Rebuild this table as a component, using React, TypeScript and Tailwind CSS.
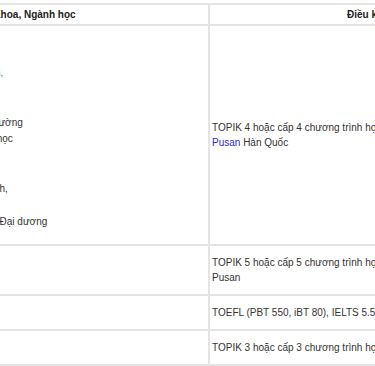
const leftLines: { text: string; link?: string }[] = [
  { text: "Khoa Kinh tế Quốc tế" },
  { text: "Ngữ văn Hàn, Ngữ văn Anh" },
  { text: "Quản trị Kinh doanh, ", link: "Tài chính," },
  { text: "Khoa Khoa học Xã hội" },
  { text: "Hành chính công, Luật" },
  { text: "Điện tử, Địa lý, Kỹ thuật Môi trường" },
  { text: "Toán, Vật liệu, Hóa học, Sinh học" },
  { text: "Khoa Nhân văn" },
  { text: "Triết học, Lịch sử" },
  { text: "Ngữ văn Hàn, Nhật, Trung, Anh," },
  { text: "Khoa Khoa học Tự nhiên" },
  { text: "Khoa học Khí quyển, Biển cả, Đại dương" },
]

const rows = [
  {
    lines: [
      <>TOPIK 4 hoặc cấp 4 chương trình học tiếng Hàn tại Đại học Quốc gia</>,
      <>
        <span className="text-[#2a2ad9]">Pusan</span> Hàn Quốc
      </>,
    ],
  },
  {
    lines: [
      <>TOPIK 5 hoặc cấp 5 chương trình học tiếng Hàn tại Đại học Quốc gia</>,
      <>Pusan</>,
    ],
  },
  { lines: [<>TOEFL (PBT 550, iBT 80), IELTS 5.5, TEPS 550</>] },
  { lines: [<>TOPIK 3 hoặc cấp 3 chương trình học tiếng Hàn</>] },
]

export default function App() {
  return (
    <div className="w-[375px] h-[366px] overflow-hidden bg-white pt-[3px] font-['Liberation_Sans',Arial,sans-serif] text-[10px] text-[#333]">
      <table className="-ml-[141px] border-collapse table-fixed w-[719px]">
        <colgroup>
          <col className="w-[349px]" />
          <col className="w-[370px]" />
        </colgroup>
        <thead>
          <tr>
            <th className="border-2 border-[#e4e4e4] py-[2px] px-[4px] font-bold leading-[15px] text-[#222] text-center">
              Khoa, Ngành học
            </th>
            <th className="border-2 border-[#e4e4e4] py-[2px] px-[4px] font-bold leading-[15px] text-[#222] text-center">
              Điều kiện ngôn ngữ
            </th>
          </tr>
        </thead>
        <tbody>
          {rows.map((row, i) => (
            <tr key={i}>
              <td
                className={
                  i === 0
                    ? "border-2 border-[#e4e4e4] pt-[6px] pb-[14px] px-[4px] align-middle"
                    : "border-2 border-[#e4e4e4] py-[9px] px-[4px] align-middle"
                }
              >
                {i === 0 && (
                  <div className="flex flex-col">
                    {leftLines.map((l, j) => (
                      <div key={j} className="whitespace-nowrap leading-[16.5px]">
                        {l.text}
                        {l.link && <span className="text-[#5a6fc0]">{l.link}</span>}
                      </div>
                    ))}
                  </div>
                )}
              </td>
              <td className="border-2 border-[#e4e4e4] py-[9px] pl-[2px] pr-[4px] align-middle">
                {row.lines.map((ln, j) => (
                  <div key={j} className="whitespace-nowrap leading-[15px]">
                    {ln}
                  </div>
                ))}
              </td>
            </tr>
          ))}
        </tbody>
      </table>
    </div>
  )
}
